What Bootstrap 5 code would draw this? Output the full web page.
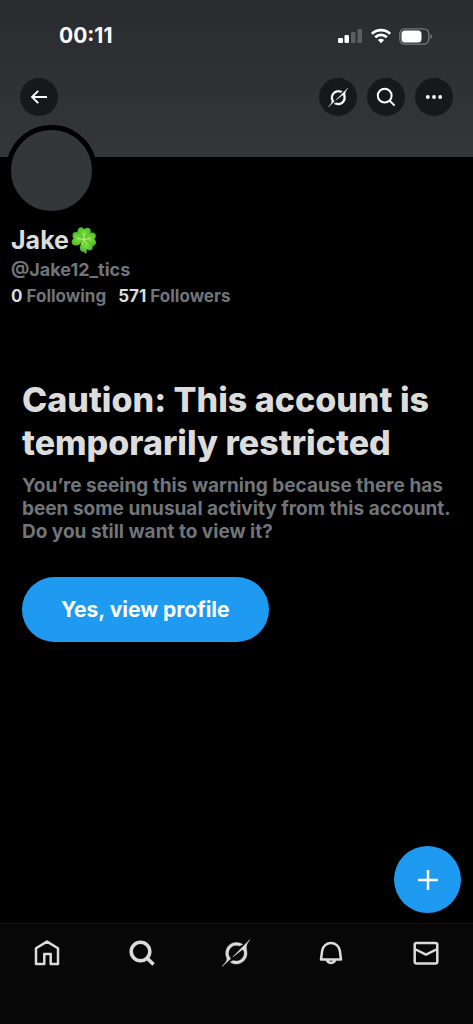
<!DOCTYPE html>
<html lang="en" data-bs-theme="dark">
<head>
<meta charset="utf-8">
<meta name="viewport" content="width=device-width, initial-scale=1">
<title>Jake (@Jake12_tics)</title>
<link href="https://cdn.jsdelivr.net/npm/bootstrap@5.3.0/dist/css/bootstrap.min.css" rel="stylesheet">
<style>
  body { background: #000; color: #dcdcdc; font-family: Inter, "Liberation Sans", sans-serif; font-weight: 700; }
  h1, h2 { color: #dcdcdc; }
  .banner { background: linear-gradient(#292b2e, #34373a); height: 157px; }
  .status-bar { height: 72px; padding: 0 40px 0 59px; color: #fff; }
  .clock { font-size: 21px; line-height: 24px; }
  .toolbar { padding: 6px 20px 0; gap: 10px; }
  .round-btn { width: 38px; height: 38px; background: #17181a; color: #fff; border: 0; }
  .profile { padding: 0 11px; }
  .avatar { width: 91px; height: 91px; margin: -32px 0 0 -5px; border: 5px solid #000; background: #33373a; }
  .display-name { font-size: 25px; line-height: 28px; margin-top: 10px; gap: 2px; }
  .muted { color: #70757a; }
  .handle { font-size: 18px; line-height: 22px; margin-top: 5px; }
  .counts { font-size: 17px; line-height: 20px; margin-top: 5px; gap: 12px; }
  .counts a { color: #70757a; }
  .counts span { color: #dcdcdc; }
  .notice { padding: 72px 22px 0; }
  .notice h1 { font-size: 34px; line-height: 43px; font-weight: 800; margin-bottom: 10px; }
  .notice p { font-size: 19px; line-height: 23px; margin-bottom: 34px; }
  .view-btn { background: #1e9bf0; color: #fff; border: 0; font-size: 21px; line-height: 25px; font-weight: 700; padding: 20px 39px; }
  .compose { width: 67px; height: 67px; background: #1e9bf0; color: #fff; border: 0; margin: 0 12px 10px 0; }
  .tab-bar { background: #070707; border-top: 1px solid #121314; height: 101px; padding-top: 13px; }
  .tab-bar a { color: #dcdcdc; }
  svg { display: block; }
</style>
</head>
<body>
<svg class="d-none" aria-hidden="true">
  <symbol id="grok" viewBox="0 0 33 32">
    <path fill="currentColor" stroke="currentColor" stroke-width=".5" d="M12.745 20.54l10.97-8.19c.539-.4 1.307-.244 1.564.38 1.349 3.288.746 7.241-1.938 9.955-2.683 2.714-6.417 3.31-9.83 1.954l-3.728 1.745c5.347 3.697 11.84 2.782 15.898-1.324 3.219-3.255 4.216-7.692 3.284-11.693l.008.009c-1.351-5.878.332-8.227 3.782-13.031L33 0l-4.54 4.59v-.014L12.743 20.544m-2.263 1.987c-3.837-3.707-3.175-9.446.1-12.755 2.42-2.449 6.388-3.448 9.852-1.979l3.72-1.737c-.67-.49-1.53-1.017-2.515-1.387-4.455-1.854-9.789-.931-13.41 2.728-3.483 3.523-4.579 8.94-2.697 13.561 1.405 3.454-.899 5.898-3.22 8.364C1.49 30.2.666 31.074 0 32l10.478-9.466"/>
  </symbol>
</svg>
<div class="d-flex flex-column min-vh-100">
  <header class="banner">
    <div class="status-bar d-flex align-items-center justify-content-between">
      <time class="clock">00:11</time>
      <div class="d-flex align-items-center">
        <svg width="25" height="16" viewBox="0 0 25 16" fill="#fff">
          <rect x="0" y="10" width="5" height="5" rx="1.3"/><rect x="6.5" y="7" width="4.5" height="8" rx="1.3"/>
          <rect x="13" y="4" width="4.5" height="11" rx="1.3" fill="#5b5d60"/><rect x="19.5" y="1" width="4.5" height="14" rx="1.3" fill="#5b5d60"/>
        </svg>
        <svg class="ms-2" width="20" height="16" viewBox="0 0 20 16" fill="none" stroke="#fff" stroke-width="2.8">
          <path d="M.9 5.800a13 13 0 0 1 18.200 0M4.200 9.300a8.300 8.300 0 0 1 11.600 0"/>
          <path d="M10 15.300l-3.100-3.200a4.400 4.400 0 0 1 6.200 0z" fill="#fff" stroke="none"/>
        </svg>
        <svg class="ms-2" width="34" height="17" viewBox="0 0 34 17">
          <rect x=".8" y=".8" width="29" height="15.4" rx="5" fill="none" stroke="#77797c" stroke-width="1.3"/>
          <rect x="2.5" y="2.5" width="20" height="12" rx="3.5" fill="#fff"/>
          <path d="M31.300 6v5q1.700-.8 1.700-2.500T31.300 6z" fill="#77797c"/>
        </svg>
      </div>
    </div>
    <nav class="toolbar d-flex" aria-label="Profile actions">
      <button class="round-btn btn rounded-circle p-0 d-flex align-items-center justify-content-center me-auto" aria-label="Back">
        <svg width="18" height="16" viewBox="0 0 18 16" fill="none" stroke="currentColor" stroke-width="1.900"><path d="M17 8H2M8.200 1.800L2 8l6.200 6.200"/></svg>
      </button>
      <button class="round-btn btn rounded-circle p-0 d-flex align-items-center justify-content-center" aria-label="Grok">
        <svg width="20" height="19"><use href="#grok"/></svg>
      </button>
      <button class="round-btn btn rounded-circle p-0 d-flex align-items-center justify-content-center" aria-label="Search">
        <svg width="20" height="20" viewBox="0 0 20 20" fill="none" stroke="currentColor" stroke-width="2"><circle cx="8.700" cy="8.700" r="6.900"/><path d="M13.600 13.600l5 5"/></svg>
      </button>
      <button class="round-btn btn rounded-circle p-0 d-flex align-items-center justify-content-center" aria-label="More">
        <svg width="18" height="4" viewBox="0 0 18 4" fill="currentColor"><circle cx="2.800" cy="2" r="1.900"/><circle cx="9" cy="2" r="1.900"/><circle cx="15.200" cy="2" r="1.900"/></svg>
      </button>
    </nav>
  </header>

  <main class="flex-grow-1 d-flex flex-column">
    <section class="profile">
      <div class="avatar rounded-circle position-relative"></div>
      <h2 class="display-name d-flex align-items-center mb-0 fw-bold">Jake
        <svg width="27" height="28" viewBox="0 0 27 28" role="img" aria-label="Four leaf clover">
          <defs><radialGradient id="leaf" cx=".5" cy=".5" r=".7"><stop offset="0" stop-color="#7fe040"/><stop offset="1" stop-color="#3db022"/></radialGradient></defs>
          <path d="M13.500 14q2 6 1 12.500" fill="none" stroke="#8ccc50" stroke-width="1.800" stroke-linecap="round"/>
          <g fill="url(#leaf)">
            <path id="lobe" d="M13 13.500C9 12 5.800 8 6.600 4.200 7.600.6 11.500.4 13.200 3.300c2.500-2.800 6.400-1.700 6.600 1.500.3 3.600-3 7-6.800 8.700z"/>
            <use href="#lobe" transform="rotate(86 13 13.500)"/>
            <use href="#lobe" transform="rotate(164 13 13.500) scale(.98)"/>
            <use href="#lobe" transform="rotate(-86 13 13.500)"/>
          </g>
          <path d="M13 13.500V8M13 13.500l5.500-1M13 13.500l-5.500-1M13 13.500l-2 5M13 13.500l3 4" stroke="#c8f58a" stroke-width="1" stroke-linecap="round"/>
        </svg>
      </h2>
      <div class="handle muted">@Jake12_tics</div>
      <div class="counts d-flex">
        <a href="#" class="text-decoration-none"><span>0</span> Following</a>
        <a href="#" class="text-decoration-none"><span>571</span> Followers</a>
      </div>
    </section>

    <section class="notice">
      <h1>Caution: This account is temporarily restricted</h1>
      <p class="muted">You’re seeing this warning because there has been some unusual activity from this account. Do you still want to view it?</p>
      <button class="view-btn btn rounded-pill">Yes, view profile</button>
    </section>

    <div class="d-flex justify-content-end mt-auto">
      <button class="compose btn rounded-circle p-0 d-flex align-items-center justify-content-center" aria-label="New post">
        <svg width="20" height="20" viewBox="0 0 20 20" stroke="currentColor" stroke-width="2.500"><path d="M10 0v20M0 10h20"/></svg>
      </button>
    </div>
  </main>

  <nav class="tab-bar row g-0" aria-label="Main">
    <a href="#" class="col d-flex justify-content-center" aria-label="Home">
      <svg width="32" height="32" viewBox="0 0 32 32" fill="none" stroke="currentColor" stroke-width="2.500"><path d="M5 11.200L16 4.600l11 6.600V27h-7.300V17h-6.400v10H5z" stroke-linejoin="round"/></svg>
    </a>
    <a href="#" class="col d-flex justify-content-center" aria-label="Search">
      <svg width="32" height="32" viewBox="0 0 32 32" fill="none" stroke="currentColor" stroke-width="3.500"><circle cx="14.500" cy="14.500" r="9.300"/><path d="M21 21l6.500 6.500"/></svg>
    </a>
    <a href="#" class="col d-flex justify-content-center" aria-label="Grok">
      <svg width="32" height="32" viewBox="-2 -2 37 36"><use href="#grok" width="33" height="32"/></svg>
    </a>
    <a href="#" class="col d-flex justify-content-center" aria-label="Notifications">
      <svg width="32" height="32" viewBox="0 0 32 32" fill="none" stroke="currentColor" stroke-width="2.500" stroke-linejoin="round"><path d="M6 22.500l1.200-9a8.900 8.900 0 0 1 17.600 0l1.200 9zM11.800 22.500a4.300 4.300 0 0 0 8.400 0"/></svg>
    </a>
    <a href="#" class="col d-flex justify-content-center" aria-label="Messages">
      <svg width="32" height="32" viewBox="0 0 32 32" fill="none" stroke="currentColor" stroke-width="2.500" stroke-linejoin="round"><rect x="4.700" y="6" width="22.600" height="20.500" rx="1.800"/><path d="M4.700 12L16 17.600 27.300 12"/></svg>
    </a>
  </nav>
</div>
<script src="https://cdn.jsdelivr.net/npm/bootstrap@5.3.0/dist/js/bootstrap.bundle.min.js"></script>
</body>
</html>
